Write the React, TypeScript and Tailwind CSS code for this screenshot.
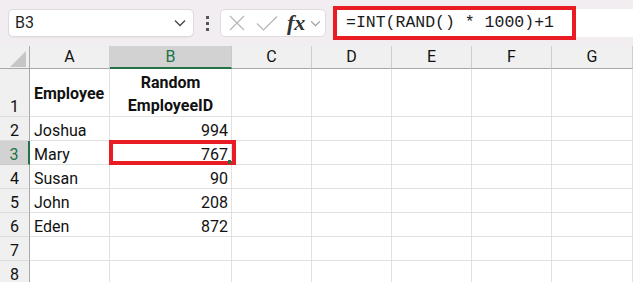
import type { FC, ReactNode } from "react";

const COLS = ["A", "B", "C", "D", "E", "F", "G"];
const ROWS: { n: number; name?: string; id?: string }[] = [
  { n: 2, name: "Joshua", id: "994" },
  { n: 3, name: "Mary", id: "767" },
  { n: 4, name: "Susan", id: "90" },
  { n: 5, name: "John", id: "208" },
  { n: 6, name: "Eden", id: "872" },
  { n: 7 },
  { n: 8 },
];

const Chevron: FC<{ className?: string }> = ({ className }) => (
  <svg viewBox="0 0 12 8" className={className} fill="none" stroke="currentColor" strokeWidth="1.3">
    <path d="M1 1.5 L6 6.5 L11 1.5" />
  </svg>
);

const Cell: FC<{ children?: ReactNode; className?: string }> = ({ children, className = "" }) => (
  <div className={`border-r border-b border-[#e1e1e1] bg-white ${className}`}>{children}</div>
);

export default function App() {
  return (
    <div
      className="h-[282px] w-[633px] overflow-hidden bg-white text-[16px] text-[#111]"
      style={{ fontFamily: 'Roboto, "Liberation Sans", Arial, sans-serif' }}
    >
      {/* formula bar */}
      <div className="flex h-[46px] items-start bg-[#f1edf0] pt-[9px]">
        <div className="ml-[8px] flex h-[28px] w-[186px] items-center justify-between rounded-[5px] border border-[#dedade] bg-white pl-[6px] pr-[7px] shadow-[0_1px_1px_rgba(0,0,0,0.04)]">
          <span className="text-[16px] text-[#1f1f1f]">B3</span>
          <Chevron className="h-[8px] w-[12px] text-[#444]" />
        </div>
        <div className="flex h-[28px] w-[26px] flex-col items-center justify-center gap-[3px]">
          <span className="h-[3px] w-[3px] bg-[#555]" />
          <span className="h-[3px] w-[3px] bg-[#555]" />
          <span className="h-[3px] w-[3px] bg-[#555]" />
        </div>
        <div className="flex h-[28px] w-[106px] items-center rounded-[5px] border border-[#dedade] bg-white pl-[8px]">
          <svg viewBox="0 0 16 16" className="h-[16px] w-[16px] text-[#b5b5b5]" fill="none" stroke="currentColor" strokeWidth="1.2">
            <path d="M1 1 L15 15 M15 1 L1 15" />
          </svg>
          <svg viewBox="0 0 22 16" className="ml-[11px] h-[16px] w-[22px] text-[#b5b5b5]" fill="none" stroke="currentColor" strokeWidth="1.2">
            <path d="M1 8.5 L7.5 15 L21 1.5" />
          </svg>
          <span
            className="ml-[9px] text-[22px] font-bold italic leading-none text-[#333]"
            style={{ fontFamily: '"Liberation Serif", "Times New Roman", serif' }}
          >
            fx
          </span>
          <Chevron className="ml-[5px] h-[7px] w-[11px] text-[#999]" />
        </div>
        <div className="relative ml-[10px] flex h-[28px] flex-1 items-center rounded-l-[5px] bg-white pl-[10px]">
          <span
            className="text-[16.5px] text-[#1a1a1a]"
            style={{ fontFamily: '"Liberation Mono", "Courier New", monospace' }}
          >
            =INT(RAND() * 1000)+1
          </span>
          <div className="absolute -top-[3px] -left-[3px] h-[34px] w-[243px] border-4 border-[#e91c24]" />
        </div>
      </div>

      {/* grid */}
      <div className="grid grid-cols-[30px_80px_122px_80px_80px_80px_80px_81px] grid-rows-[23px_48px_repeat(7,24px)]">
        <div className="relative border-r border-b border-[#a8a8a8] bg-[#f0f0f0]">
          <svg viewBox="0 0 16 16" className="absolute top-[5px] left-[10px] h-[16px] w-[16px]">
            <path d="M16 0 L16 16 L0 16 Z" fill="#c6c6c6" />
          </svg>
        </div>
        {COLS.map((c) =>
          c === "B" ? (
            <div
              key={c}
              className="flex items-center justify-center border-r border-b-2 border-r-[#c8c8c8] border-b-[#217346] bg-[#d2d2d2] text-[#217346]"
            >
              {c}
            </div>
          ) : (
            <div
              key={c}
              className="flex items-center justify-center border-r border-b border-r-[#cfcfcf] border-b-[#a8a8a8] bg-[#f0f0f0]"
            >
              {c}
            </div>
          ),
        )}

        {/* row 1 */}
        <div className="flex items-end justify-center border-r border-b border-r-[#a8a8a8] border-b-[#dadada] bg-[#f0f0f0] leading-[18px]">
          1
        </div>
        <Cell className="flex items-center pt-[2px] pl-[4px] font-bold">Employee</Cell>
        <Cell className="flex flex-col items-center justify-center pt-[2px] text-center leading-[23px] font-bold">
          <span>Random</span>
          <span>EmployeeID</span>
        </Cell>
        {COLS.slice(2).map((c) => (
          <Cell key={c} />
        ))}

        {ROWS.map((r) => {
          const sel = r.n === 3;
          return [
            <div
              key={`h${r.n}`}
              className={`flex items-end justify-center border-b leading-[18px] ${
                sel
                  ? "border-r-2 border-r-[#217346] border-b-[#c8c8c8] bg-[#d2d2d2] text-[#217346]"
                  : "border-r border-r-[#a8a8a8] border-b-[#dadada] bg-[#f0f0f0]"
              }`}
            >
              {r.n}
            </div>,
            <Cell key={`a${r.n}`} className="flex items-end pl-[4px] leading-[18px]">
              {r.name}
            </Cell>,
            <Cell key={`b${r.n}`} className="relative flex items-end justify-end pr-[3px] leading-[18px]">
              {r.id}
              {sel && (
                <>
                  <div className="absolute -top-[1px] -left-[1px] h-[25px] w-[127px] border-4 border-[#e91c24]" />
                  <div className="absolute right-0 bottom-0 h-[4px] w-[3px] bg-[#217346]" />
                </>
              )}
            </Cell>,
            ...COLS.slice(2).map((c) => <Cell key={`${c}${r.n}`} />),
          ];
        })}
      </div>
    </div>
  );
}
